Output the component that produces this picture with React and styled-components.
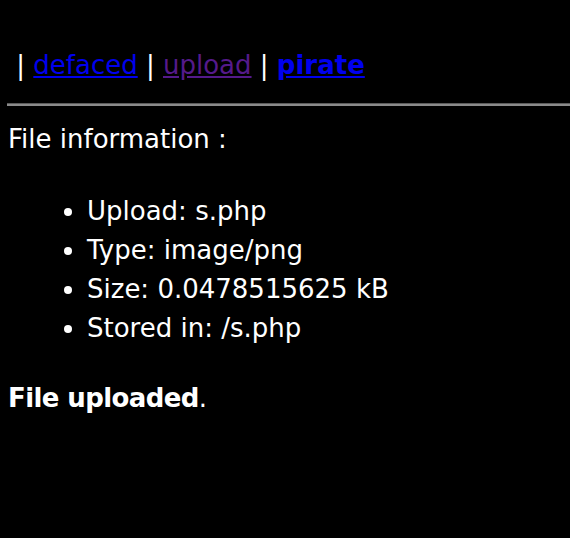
import React from "react";
import styled, { createGlobalStyle } from "styled-components";

const Global = createGlobalStyle`
  html, body { background: #000; }
  body {
    margin: 0;
    padding: 10px 0 0 7px;
    color: #fff;
    font-family: "DejaVu Sans", "Noto Sans CJK KR", sans-serif;
    font-size: 26px;
    line-height: 39px;
    overflow: hidden;
  }
`;

const Nav = styled.div`
  margin-top: 36px;
  padding-left: 1px;
  white-space: pre;
`;

const Link = styled.a`
  color: ${(p) => (p.$visited ? "#551a8b" : "#0000ee")};
  text-decoration: underline;
  font-weight: ${(p) => (p.$bold ? 700 : 400)};
`;

const Rule = styled.hr`
  margin: 18px 0 14px 0;
  height: 0;
  border: none;
  border-top: 1px solid #5a5a5a;
  border-bottom: 2px solid #8a8a8a;
`;

const Para = styled.div`
  padding-left: 1px;
`;

const List = styled.ul`
  margin: 33px 0 31px 0;
  padding-left: 80px;
  list-style: disc;
`;

const Done = styled.div`
  padding-left: 1px;
`;

const Strong = styled.b`
  font-weight: 700;
  letter-spacing: -0.6px;
`;

export default function App() {
  return (
    <>
      <Global />
      <Nav>
        {" | "}
        <Link href="#">defaced</Link>
        {" | "}
        <Link href="#" $visited>upload</Link>
        {" | "}
        <Link href="#" $bold>pirate</Link>
      </Nav>
      <Rule />
      <Para>File information :</Para>
      <List>
        <li>Upload: s.php</li>
        <li>Type: image/png</li>
        <li>Size: 0.0478515625 kB</li>
        <li>Stored in: /s.php</li>
      </List>
      <Done>
        <Strong>File uploaded</Strong>.
      </Done>
    </>
  );
}
